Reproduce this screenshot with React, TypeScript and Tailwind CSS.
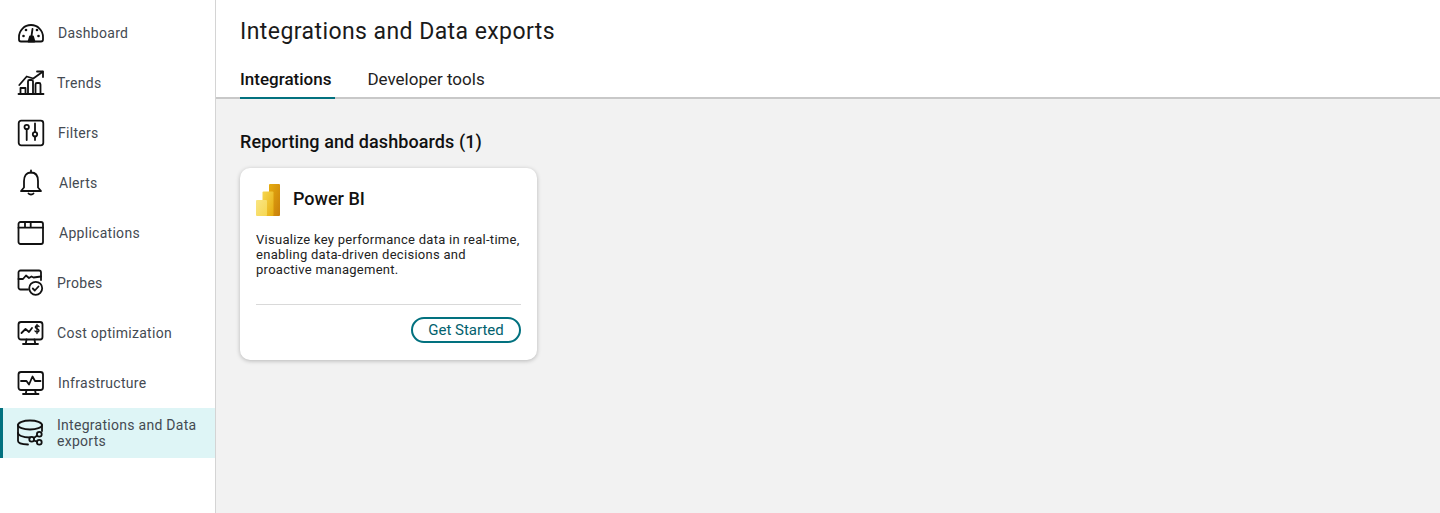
import type { ReactNode } from "react";

function Icon({ children }: { children: ReactNode }) {
    return (
        <svg viewBox="0 0 28 28" fill="none" stroke="#111" strokeWidth="1.8" strokeLinecap="round" strokeLinejoin="round" className="w-7 h-7 shrink-0">
            {children}
        </svg>
    );
}

const navItems = [
    {
        label: "Dashboard",
        textClass: "ml-[13px]",
        icon: (
            <>
                <path d="M4 22.500h20a2 2 0 0 0 2-2V18a12 12 0 0 0-24 0v2.500a2 2 0 0 0 2 2z" />
                <path d="M15.500 10l-1 7" />
                <path d="M11.500 22.500l1.500-5h3l1.500 5z" fill="#111" />
                <circle cx="6.500" cy="17" r="1.300" fill="#111" stroke="none" />
                <circle cx="9" cy="11" r="1.300" fill="#111" stroke="none" />
                <circle cx="20" cy="11" r="1.300" fill="#111" stroke="none" />
                <circle cx="21.500" cy="17" r="1.300" fill="#111" stroke="none" />
            </>
        ),
    },
    {
        label: "Trends",
        textClass: "ml-[12px]",
        icon: (
            <>
                <path d="M1.500 25h25" />
                <rect x="3.500" y="19" width="5" height="6" />
                <path d="M11 25V12.500a1.500 1.500 0 0 1 1.500-1.500h2a1.500 1.500 0 0 1 1.500 1.500V25" />
                <path d="M18.500 25V15.500a1.500 1.500 0 0 1 1.500-1.500h2a1.500 1.500 0 0 1 1.500 1.500V25" />
                <path d="M2.300 16l7.400-8.500 6.600 2L25.700 2.700" />
                <path d="M20 2.500h6V8" />
            </>
        ),
    },
    {
        label: "Filters",
        textClass: "ml-[13px]",
        icon: (
            <>
                <rect x="1.700" y="1.700" width="24.600" height="24.600" rx="2.500" />
                <circle cx="9.700" cy="8" r="2.200" />
                <path d="M9.700 10.200V21" />
                <circle cx="18" cy="15.300" r="2.200" />
                <path d="M18 4.500v8.600M18 17.500V21" />
            </>
        ),
    },
    {
        label: "Alerts",
        textClass: "ml-[14px]",
        icon: (
            <>
                <path d="M14 3.500c-5 0-7 4-7 8.500v6.500L4 22h20l-3-3.500V12c0-4.500-2-8.500-7-8.500z" />
                <path d="M14 1.500v2" />
                <path d="M11.500 24.500c1 1.300 4 1.300 5 0" />
            </>
        ),
    },
    {
        label: "Applications",
        textClass: "ml-[14px]",
        icon: (
            <>
                <rect x="1.500" y="3" width="24.500" height="22" rx="2" />
                <path d="M1.500 8.700h24.500M8 3v5.700M13.700 3v5.700" />
            </>
        ),
    },
    {
        label: "Probes",
        textClass: "ml-[12px]",
        icon: (
            <>
                <path d="M11 20.500H3.500a2 2 0 0 1-2-2V3.500a2 2 0 0 1 2-2H22a2 2 0 0 1 2 2V11" />
                <path d="M1.500 10h4.500l3-3.500 3 2.500 2.500-1.500 2 1 7.500-1" />
                <circle cx="18.700" cy="19.300" r="6.500" />
                <path d="M15.800 19.500l2 2 3.700-4" />
            </>
        ),
    },
    {
        label: "Cost optimization",
        textClass: "ml-[12px]",
        icon: (
            <>
                <rect x="1.500" y="3" width="24" height="17.500" rx="2.500" />
                <path d="M9.500 20.500l-.7 4M17.500 20.500l.7 4M6 25h15" />
                <path d="M4.500 14l4-4 3.500 3 3-4" />
                <path d="M22 7.500c-.5-1-3.500-1.200-3.700.5-.2 2 3.900 1.500 3.700 3.700-.2 1.700-3.400 1.600-4 .3M20 5.500v9" strokeWidth="1.400" />
            </>
        ),
    },
    {
        label: "Infrastructure",
        textClass: "ml-[13px]",
        icon: (
            <>
                <rect x="1.500" y="3" width="24.500" height="18" rx="2.500" />
                <path d="M9.500 21l-.7 3.500M18 21l.7 3.500M6 25h15.500" />
                <path d="M4 12h5.500l2.500 3.500 3.500-8 2.500 4.500h5.500" />
            </>
        ),
    },
    {
        label: "Integrations and Data exports",
        textClass: "ml-[12px]",
        active: true,
        icon: (
            <>
                <ellipse cx="13" cy="6" rx="12" ry="4.500" />
                <path d="M1 6v16c0 1.500 3 3.300 10 3.500" />
                <path d="M25 6v6" />
                <path d="M1 14c0 2 4 4.500 12 4.500" />
                <circle cx="22.300" cy="15.300" r="2.400" />
                <circle cx="22.300" cy="23.300" r="2.400" />
                <circle cx="14.700" cy="20.300" r="2.400" />
                <path d="M16.800 19l3.400-2.400M16.800 21.500l3.400 1.200" />
            </>
        ),
    },
];

function PowerBiLogo() {
    return (
        <svg viewBox="0 0 24 32" className="w-6 h-8 shrink-0">
            <defs>
                <linearGradient id="pbDark" x1="0" y1="0" x2="1" y2="1">
                    <stop offset="0" stopColor="#e6ad10" />
                    <stop offset="1" stopColor="#c87e0a" />
                </linearGradient>
                <linearGradient id="pbMid" x1="0" y1="0" x2="1" y2="1">
                    <stop offset="0" stopColor="#f6d751" />
                    <stop offset="1" stopColor="#e6ad10" />
                </linearGradient>
                <linearGradient id="pbLight" x1="0" y1="0" x2="1" y2="1">
                    <stop offset="0" stopColor="#f9e583" />
                    <stop offset="1" stopColor="#f6d751" />
                </linearGradient>
            </defs>
            <rect x="13" y="0" width="11" height="32" rx="1" fill="url(#pbDark)" />
            <rect x="6.500" y="7.500" width="11" height="24.500" rx="1" fill="url(#pbMid)" />
            <rect x="0" y="16" width="11" height="16" rx="1" fill="url(#pbLight)" />
        </svg>
    );
}

export default function App() {
    return (
        <div className="flex h-[513px] w-[1440px] overflow-hidden bg-white text-[#111] font-['Roboto',sans-serif]">
            <aside className="w-[216px] shrink-0 border-r border-[#d4d4d4] pt-2">
                {navItems.map((item) => (
                    <div
                        key={item.label}
                        className={`flex h-[50px] items-center pl-[17px] ${item.active ? "bg-[#def5f6] border-l-[3px] border-[#02717f] !pl-[14px]" : ""}`}
                    >
                        <Icon>{item.icon}</Icon>
                        <span className={`${item.textClass} text-[14px] leading-4 tracking-[0.28px] text-[#444a52] pr-4`}>{item.label}</span>
                    </div>
                ))}
            </aside>
            <div className="flex min-w-0 flex-1 flex-col">
                <header className="h-[99px] shrink-0 border-b-2 border-[#c8c8c8] pl-6">
                    <h1 className="pt-[18px] text-[23px] leading-[28px] tracking-[0.43px] text-[#1a1a1a]">Integrations and Data exports</h1>
                    <nav className="mt-[13px] flex gap-8">
                        <div className="relative h-[38px] pr-1 pt-[10px] text-[17px] leading-[20px] font-medium">
                            Integrations
                            <span className="absolute bottom-[-2px] left-0 right-0 h-[2px] bg-[#02717f]" />
                        </div>
                        <div className="h-[38px] pt-[10px] text-[17px] leading-[20px] text-[#222]">Developer tools</div>
                    </nav>
                </header>
                <main className="flex-1 bg-[#f2f2f2] pl-6 pt-[31px]">
                    <h2 className="text-[18px] leading-6 font-medium tracking-[0.08px] text-[#111]">Reporting and dashboards (1)</h2>
                    <div className="mt-[14px] flex h-[192px] w-[297px] flex-col rounded-[10px] bg-white px-4 pt-4 shadow-[0_1px_4px_rgba(0,0,0,0.25)]">
                        <div className="flex items-center gap-[13px]">
                            <PowerBiLogo />
                            <span className="pb-[2px] text-[18px] leading-6 font-medium">Power BI</span>
                        </div>
                        <p className="mt-[16px] text-[13px] leading-[15px] tracking-[0.28px] text-[#222]">
                            Visualize key performance data in real-time, enabling data-driven decisions and proactive management.
                        </p>
                        <div className="mt-auto border-t border-[#d9d9d9] pt-[12px] pb-[17px] flex justify-end">
                            <button className="h-[26px] w-[110px] rounded-full border-2 border-[#02717f] text-[15px] leading-none text-[#02616e]">
                                Get Started
                            </button>
                        </div>
                    </div>
                </main>
            </div>
        </div>
    );
}
